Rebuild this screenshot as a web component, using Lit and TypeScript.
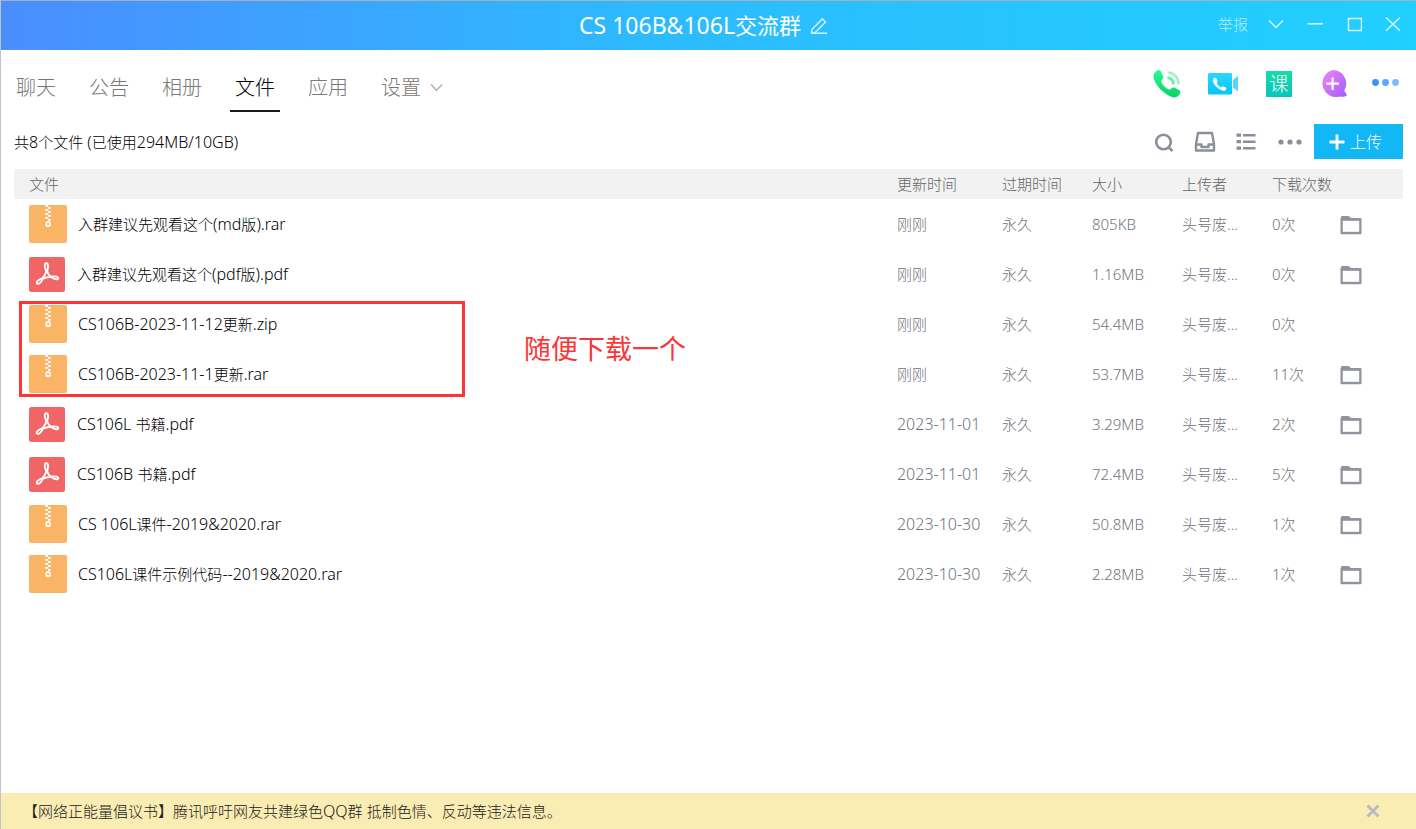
import { LitElement, html, svg, css, nothing } from "lit";
import { customElement } from "lit/decorators.js";

interface GroupFile {
  name: string;
  kind: "zip" | "pdf";
  updated: string;
  size: string;
  downloads: string;
  folder: boolean;
}

const FILES: GroupFile[] = [
  { name: "入群建议先观看这个(md版).rar", kind: "zip", updated: "刚刚", size: "805KB", downloads: "0次", folder: true },
  { name: "入群建议先观看这个(pdf版).pdf", kind: "pdf", updated: "刚刚", size: "1.16MB", downloads: "0次", folder: true },
  { name: "CS106B-2023-11-12更新.zip", kind: "zip", updated: "刚刚", size: "54.4MB", downloads: "0次", folder: false },
  { name: "CS106B-2023-11-1更新.rar", kind: "zip", updated: "刚刚", size: "53.7MB", downloads: "11次", folder: true },
  { name: "CS106L 书籍.pdf", kind: "pdf", updated: "2023-11-01", size: "3.29MB", downloads: "2次", folder: true },
  { name: "CS106B 书籍.pdf", kind: "pdf", updated: "2023-11-01", size: "72.4MB", downloads: "5次", folder: true },
  { name: "CS 106L课件-2019&2020.rar", kind: "zip", updated: "2023-10-30", size: "50.8MB", downloads: "1次", folder: true },
  { name: "CS106L课件示例代码--2019&2020.rar", kind: "zip", updated: "2023-10-30", size: "2.28MB", downloads: "1次", folder: true },
];

const TABS = ["聊天", "公告", "相册", "文件", "应用"];

const ZIP_TEETH = [0, 4, 8, 12];

// Latin runs are set one pixel larger than the Chinese text around them.
const mixed = (text: string) =>
  text
    .split(/([\x20-\x7e]+)/)
    .filter((run) => run !== "")
    .map((run) => (/^[\x20-\x7e]/.test(run) ? html`<span class="latin">${run}</span>` : run));

const zipIcon = html`<svg width="38" height="38" viewBox="0 0 38 38" aria-hidden="true">
  <rect width="38" height="38" rx="2" fill="#f9b466" />
  ${ZIP_TEETH.map(
    (y) => svg`<rect x="16.4" y=${y} width="2.8" height="1.8" fill="#fff" /><rect x="19" y=${y + 2} width="2.8" height="1.8" fill="#fff" />`
  )}
  <rect x="17.3" y="17.2" width="3.6" height="4" rx="1" fill="none" stroke="#fff" stroke-width="1.7" />
</svg>`;

const pdfIcon = html`<svg width="36" height="36" viewBox="0 0 36 36" aria-hidden="true">
  <rect width="36" height="35" y="1" rx="2.5" fill="#f26566" />
  <path
    d="M17.3 7.2c1.9 0 2.2 2.6 1.5 5.4-.3 1.300-.6 2.200-.6 2.900.7 2.200 2 3.900 3.500 5.100 2.800-.3 7.300-.3 7.500 1.400.2 1.900-3.500 1.900-7.700-1.200-2.500.3-5.300.9-7.500 1.800-1.900 3.600-3.900 5.800-5.600 5.100-2-.9.300-3.900 5.500-5.900 1.700-2.300 2.900-4.300 3.500-6.300-1.700-3.300-2.600-8.300-.1-8.300z"
    fill="none" stroke="#fff" stroke-width="1.900" stroke-linejoin="round" />
</svg>`;

const folderIcon = html`<svg width="22" height="20" viewBox="0 0 22 20" aria-hidden="true">
  <path d="M1 3V2.200Q1 1 2.200 1H8.500L11 3H20.500Q21.500 3 21.500 4V18.300Q21.500 19.300 20.500 19.300H1.500Q.5 19.300 .5 18.300V3z" fill="#8f939e" />
  <rect x="2.800" y="5.800" width="16.400" height="11" fill="#fff" />
</svg>`;

@customElement("app-root")
export class AppRoot extends LitElement {
  static styles = css`
    :host {
      display: flex;
      flex-direction: column;
      min-height: 100vh;
      box-sizing: border-box;
      border-left: 1px solid #c3c4c8;
      background: #fff;
      color: #000;
      font-family: "Noto Sans", "Noto Sans CJK SC Light", "Noto Sans CJK SC", sans-serif;
      font-size: 15px;
      font-weight: 300;
      line-height: 20px;
    }
    button {
      display: flex;
      align-items: center;
      justify-content: center;
      margin: 0;
      padding: 0;
      border: 0;
      background: none;
      color: inherit;
      font: inherit;
      cursor: pointer;
    }
    svg {
      display: block;
      flex: none;
    }
    .latin {
      font-size: 16px;
    }
    .titlebar {
      display: grid;
      grid-template-columns: 1fr auto 1fr;
      align-items: center;
      height: 50px;
      box-sizing: border-box;
      border-top: 1px solid #a9b0ba;
      background: linear-gradient(90deg, #4a8dff 0%, #2dbaff 45%, #20d0ff 100%);
      color: #fff;
    }
    .title {
      grid-column: 2;
      display: flex;
      align-items: center;
      gap: 9px;
      padding-right: 10px;
    }
    .title h1 {
      margin: 0;
      padding-bottom: 2px;
      font-family: "Noto Sans", "Noto Sans CJK SC", sans-serif;
      font-size: 22px;
      font-weight: 400;
      line-height: 30px;
    }
    .title .latin {
      font-size: 23px;
    }
    .controls {
      display: flex;
      justify-content: flex-end;
      align-items: center;
      padding-right: 12px;
      padding-bottom: 4px;
    }
    .controls button {
      width: 22px;
      height: 22px;
      margin-left: 17px;
    }
    .controls .report {
      width: auto;
      margin: 0;
      color: #b4efff;
    }
    .navrow {
      display: flex;
      justify-content: space-between;
      padding: 0 17px 0 10px;
      height: 62px;
    }
    .tabs {
      display: flex;
      gap: 23px;
    }
    .tab {
      padding: 15px 5px 0;
      border-bottom: 2px solid transparent;
      color: #787878;
      font-size: 20px;
      line-height: 28px;
      gap: 9px;
    }
    .tab.active {
      border-bottom-color: #1a1a1a;
      color: #000;
    }
    .apps {
      display: flex;
      align-items: center;
      gap: 16px;
      padding-top: 6px;
    }
    .apps button {
      width: 40px;
      height: 32px;
    }
    .apps .more {
      width: 28px;
    }
    .lesson span {
      width: 26px;
      height: 26px;
      background: linear-gradient(180deg, #16dda5, #08c5bd);
      color: #fff;
      font-size: 19px;
      line-height: 26px;
    }
    .toolbar {
      display: flex;
      align-items: center;
      justify-content: space-between;
      padding: 12px 13px 10px;
    }
    .summary {
      margin: 0;
    }
    .tools {
      display: flex;
      align-items: center;
      gap: 17px;
    }
    .tools button {
      width: 24px;
      height: 24px;
    }
    .tools .more {
      width: 30px;
    }
    .tools .upload {
      width: 89px;
      height: 35px;
      box-sizing: border-box;
      margin-left: -8px;
      padding-right: 6px;
      gap: 5px;
      background: #12b7f5;
      color: #fff;
      font-size: 16px;
    }
    .listing {
      position: relative;
      flex: 1;
      padding: 0 13px;
    }
    table {
      width: 100%;
      table-layout: fixed;
      border-collapse: collapse;
      color: #70737d;
    }
    th {
      height: 30px;
      padding: 0;
      background: #f2f2f2;
      color: #666;
      font-weight: 300;
      text-align: left;
    }
    td {
      height: 50px;
      padding: 0;
      overflow: hidden;
      white-space: nowrap;
    }
    th:first-child,
    td:first-child {
      padding-left: 15px;
    }
    td button {
      padding-top: 2px;
    }
    .c-105 {
      width: 105px;
    }
    .c-90 {
      width: 90px;
    }
    .c-68 {
      width: 68px;
    }
    .c-63 {
      width: 63px;
    }
    .file {
      display: flex;
      align-items: center;
      gap: 12px;
      color: #000;
      text-decoration: none;
    }
    .file.zip {
      gap: 11px;
    }
    .note {
      position: absolute;
      top: 132px;
      left: 18px;
      width: 440px;
      height: 90px;
      border: 3px solid #fa3636;
      pointer-events: none;
    }
    .note span {
      position: absolute;
      top: 27px;
      left: 502px;
      color: #fa3636;
      font-family: "Noto Sans CJK SC", sans-serif;
      font-size: 27px;
      font-weight: 400;
      line-height: 34px;
      white-space: nowrap;
    }
    .notice {
      display: flex;
      align-items: center;
      justify-content: space-between;
      height: 36px;
      padding: 0 32px 0 22px;
      background: #faedb4;
      color: #202020;
    }
    .notice p {
      margin: 0;
    }
    .notice button {
      width: 22px;
      height: 22px;
    }
  `;

  private renderTitlebar() {
    return html`<header class="titlebar">
      <div class="title">
        <h1>${mixed("CS 106B&106L交流群")}</h1>
        <button aria-label="修改群名">
          <svg width="18" height="18" viewBox="0 0 18 18" fill="none" stroke="#c5f0ff" stroke-width="1.600">
            <path d="M1.500 16.200 2.300 12 12.300 1.900 15.600 5 5.500 15.200Z" stroke-linejoin="round" />
            <path d="M1.200 16.200H17" />
          </svg>
        </button>
      </div>
      <div class="controls">
        <button class="report">举报</button>
        <button aria-label="更多">
          <svg width="16" height="16" viewBox="0 0 16 16" fill="none" stroke="#e4faff" stroke-width="1.300"><path d="M1 4.500 8 11.500 15 4.500" /></svg>
        </button>
        <button aria-label="最小化">
          <svg width="16" height="16" viewBox="0 0 16 16" stroke="#e4faff" stroke-width="1.500"><path d="M0.500 7.800H16" /></svg>
        </button>
        <button aria-label="最大化">
          <svg width="16" height="16" viewBox="0 0 16 16" fill="none" stroke="#e4faff" stroke-width="1.400"><rect x="2.500" y="2.500" width="13" height="12" /></svg>
        </button>
        <button aria-label="关闭">
          <svg width="16" height="16" viewBox="0 0 16 16" stroke="#e4faff" stroke-width="1.300"><path d="M1 1.500 15 14.800M15 1.500 1 14.800" /></svg>
        </button>
      </div>
    </header>`;
  }

  private renderNav() {
    return html`<div class="navrow">
      <nav class="tabs">
        ${TABS.map((t) => html`<button class="tab ${t === "文件" ? "active" : ""}">${t}</button>`)}
        <button class="tab">
          设置
          <svg width="13" height="10" viewBox="0 0 13 10" fill="none" stroke="#b0b0b0" stroke-width="1.500"><path d="M1 1.500 6.500 7.500 12 1.500" /></svg>
        </button>
      </nav>
      <div class="apps">
        <button aria-label="语音通话">
          <svg width="32" height="32" viewBox="0 0 32 32">
            <defs>
              <linearGradient id="call" x1="0" y1="0" x2="0" y2="1"><stop offset="0" stop-color="#2bf79b" /><stop offset="1" stop-color="#06d660" /></linearGradient>
            </defs>
            <path d="M5.200 3.200C7 1.700 9 1.500 9.900 3.500L12.100 8.200C12.800 9.700 12 10.700 10.700 12.300C10 13.300 10.200 14 11 15.200C12.800 18 15 20.100 17.300 21.300C18.600 21.900 19.300 21.600 20.300 20.600C21.500 19.300 22.600 19.100 23.800 19.800L28.600 22.500C30 23.400 29.700 25 28.300 26.800C26.300 29.400 23.500 30.200 19.700 28.500C11.800 25 5.500 18.300 2.800 11C1.700 7.700 2.700 5.200 5.200 3.200Z" fill="url(#call)" />
            <path d="M17.600 10A6 6 0 0 1 22.300 15.400" fill="none" stroke="#5ff0a4" stroke-width="2.800" stroke-linecap="round" />
            <path d="M18.300 4.500A11 11 0 0 1 27.500 15.300" fill="none" stroke="#94f5c0" stroke-width="2.600" stroke-linecap="round" />
          </svg>
        </button>
        <button aria-label="视频通话">
          <svg width="32" height="32" viewBox="0 0 32 32">
            <defs>
              <linearGradient id="video" x1="0" y1="0" x2="0" y2="1"><stop offset="0" stop-color="#2bd8ff" /><stop offset="1" stop-color="#06c4fb" /></linearGradient>
            </defs>
            <path d="M26 12 30 8.400Q31 7.800 31 9V22.200Q31 23.300 30 22.700L26 19.200Z" fill="#54d5ff" />
            <rect x="1" y="5" width="24" height="21.500" rx="1.200" fill="url(#video)" />
            <path d="M7.200 10.200C8.200 9.400 9 9.600 9.500 10.600L10.500 12.700C10.900 13.600 9.700 14.300 9.800 15C10.600 17 12.300 18.600 14 19.300C14.900 19.500 15.500 17.900 16.600 18.400L18.900 19.600C19.800 20.200 19.500 21 18.600 21.900C17.300 23.200 15.700 22.900 14 22.100C10.400 20.500 7.500 17.300 6.200 14C5.600 12.300 6 11.100 7.200 10.200Z" fill="#fff" />
          </svg>
        </button>
        <button class="lesson" aria-label="群课堂"><span>课</span></button>
        <button aria-label="添加应用">
          <svg width="32" height="32" viewBox="2 0 32 32">
            <defs>
              <linearGradient id="plus" x1="0" y1="0" x2="1" y2="1"><stop offset="0" stop-color="#ef87f5" /><stop offset="1" stop-color="#a05cff" /></linearGradient>
            </defs>
            <path d="M15.600 2A13.500 13.500 0 0 1 27.200 22.600Q28.200 24.600 29.600 26.300Q30.200 27.300 29 27.900Q26 29.300 22.700 28.500A13.500 13.500 0 1 1 15.600 2Z" fill="url(#plus)" />
            <path d="M15.600 9.500V22M9.300 15.700H21.900" stroke="#fff" stroke-width="2.200" />
          </svg>
        </button>
        <button class="more" aria-label="更多应用">
          <svg width="28" height="32" viewBox="0 0 28 32">
            <circle cx="4.500" cy="14.500" r="3.400" fill="#3595ff" /><circle cx="14.500" cy="14.500" r="3.400" fill="#58a8ff" /><circle cx="24.500" cy="14.500" r="3.400" fill="#7abaff" />
          </svg>
        </button>
      </div>
    </div>`;
  }

  private renderToolbar() {
    return html`<div class="toolbar">
      <p class="summary">${mixed("共8个文件 (已使用294MB/10GB)")}</p>
      <div class="tools">
        <button aria-label="搜索">
          <svg width="24" height="24" viewBox="0 0 24 24" fill="none" stroke="#8b8f99" stroke-width="2.600"><circle cx="11.500" cy="12" r="7.300" /><path d="M16.500 17.300 20.500 21" /></svg>
        </button>
        <button aria-label="收件箱">
          <svg width="24" height="24" viewBox="0 0 24 24" fill="none" stroke="#8b8f99" stroke-width="2.400" stroke-linejoin="round">
            <path d="M5 3H19L21 14V20.500H3V14Z" />
            <path d="M3 14.500H8.500V17H15.500V14.500H21" />
          </svg>
        </button>
        <button aria-label="列表视图">
          <svg width="24" height="24" viewBox="0 0 24 24" fill="#8b8f99">
            <path d="M2.500 3.500H7V6.800H2.500ZM2.500 10H7V13.300H2.500ZM2.500 16.500H7V19.800H2.500ZM9 4H21.500V6.400H9ZM9 10.500H21.500V12.900H9ZM9 17H21.500V19.400H9Z" />
          </svg>
        </button>
        <button class="more" aria-label="更多操作">
          <svg width="24" height="24" viewBox="0 0 24 24" fill="#8b8f99"><circle cx="3" cy="12" r="2.600" /><circle cx="12" cy="12" r="2.600" /><circle cx="21" cy="12" r="2.600" /></svg>
        </button>
        <button class="upload">
          <svg width="16" height="16" viewBox="0 0 16 16" stroke="#fff" stroke-width="2.800"><path d="M8 0.500V15.500M0.500 8H15.500" /></svg>
          上传
        </button>
      </div>
    </div>`;
  }

  private renderRow(f: GroupFile) {
    return html`<tr>
      <td><a class="file ${f.kind}" href="#">${f.kind === "zip" ? zipIcon : pdfIcon}<span>${mixed(f.name)}</span></a></td>
      <td>${mixed(f.updated)}</td>
      <td>永久</td>
      <td>${f.size}</td>
      <td>头号废...</td>
      <td>${f.downloads}</td>
      <td>${f.folder ? html`<button aria-label="打开所在文件夹">${folderIcon}</button>` : nothing}</td>
    </tr>`;
  }

  render() {
    return html`
      ${this.renderTitlebar()} ${this.renderNav()} ${this.renderToolbar()}
      <main class="listing">
        <table>
          <colgroup>
            <col />
            <col class="c-105" />
            <col class="c-90" />
            <col class="c-90" />
            <col class="c-90" />
            <col class="c-68" />
            <col class="c-63" />
          </colgroup>
          <thead>
            <tr>
              <th>文件</th>
              <th>更新时间</th>
              <th>过期时间</th>
              <th>大小</th>
              <th>上传者</th>
              <th colspan="2">下载次数</th>
            </tr>
          </thead>
          <tbody>
            ${FILES.map((f) => this.renderRow(f))}
          </tbody>
        </table>
        <div class="note"><span>随便下载一个</span></div>
      </main>
      <footer class="notice">
        <p>${mixed("【网络正能量倡议书】腾讯呼吁网友共建绿色QQ群 抵制色情、反动等违法信息。")}</p>
        <button aria-label="关闭公告">
          <svg width="14" height="14" viewBox="0 0 14 14" stroke="#b9bac0" stroke-width="2.800"><path d="M1.500 1.500 12.500 12.500M12.500 1.500 1.500 12.500" /></svg>
        </button>
      </footer>
    `;
  }
}
